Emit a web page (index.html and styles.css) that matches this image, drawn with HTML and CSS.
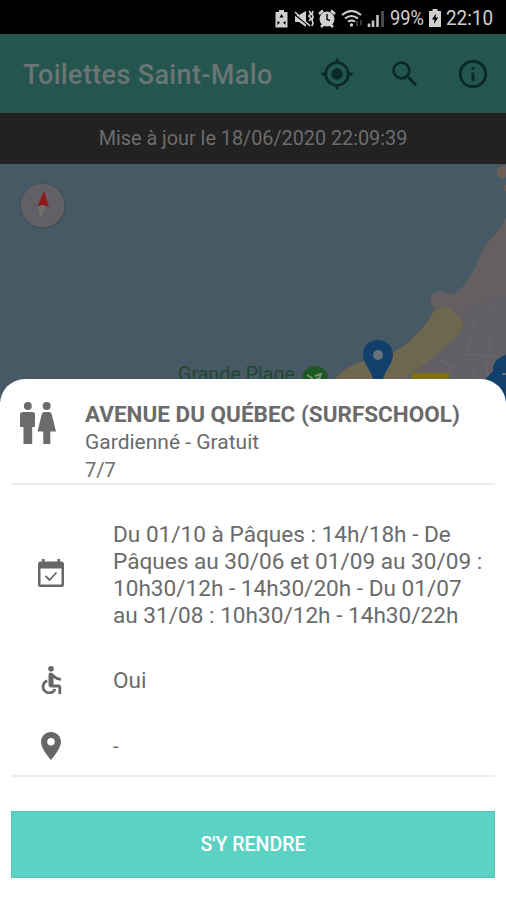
FILE: index.html
```html
<!DOCTYPE html>
<html lang="fr">
<head>
    <meta charset="UTF-8">
    <meta name="viewport" content="width=device-width, initial-scale=1.0">
    <title>Toilettes Saint-Malo</title>
    <link rel="stylesheet" href="styles.css">
</head>
<body>
    <div class="status-bar">
        <svg class="status-icons" viewBox="270 0 118 34">
            <!-- battery saver -->
            <path fill="#d0d0d0" d="M279 9h5v2h3.500v15.500H275.500V11H279z"/>
            <path fill="#000" d="M281.500 13l2 3.500h-4zM277.500 20l2.500 1.500-2.500 2.500zM285.500 20l-2.500 1.500 2.500 2.500z"/>
            <!-- sound off -->
            <path fill="#d0d0d0" d="M295 14h4l7-4v16l-7-5h-4z"/>
            <path d="M294 13l15 12" stroke="#000" stroke-width="1.200"/>
            <path d="M295 11l15 14M309 10l2 2.500-2 2.500 2 2.500-2 2.500M313 10l-1 3 1 3-1 3 1 3-1 3" fill="none" stroke="#d0d0d0" stroke-width="1.700"/>
            <!-- alarm -->
            <circle cx="327" cy="18" r="7.500" fill="#d0d0d0"/>
            <path d="M319 13l4-3.500M335 13l-4-3.500M321 26l3-3M333 26l-3-3" stroke="#d0d0d0" stroke-width="2.600"/>
            <path d="M327 13v5.500l3 1" fill="none" stroke="#111" stroke-width="1.500"/>
            <!-- wifi -->
            <path d="M342 14q9.500-8 19 0M345 17.500q6.500-5 13 0M348 20.800q3.500-2.500 7 0" fill="none" stroke="#d0d0d0" stroke-width="2"/>
            <circle cx="351.500" cy="24" r="1.700" fill="#d0d0d0"/>
            <path d="M357 20v5M361 19v5" stroke="#444" stroke-width="1.800"/>
            <!-- signal -->
            <path d="M369 22.500V26M373 19.500V26M377.500 14V26" stroke="#c4c4c4" stroke-width="2.600"/>
            <path d="M382.500 10V26" stroke="#4a4a4a" stroke-width="3"/>
        </svg>
        <span class="percent">99%</span>
        <svg class="battery" viewBox="0 0 12 18">
            <path fill="#d0d0d0" d="M3.500 0h5v2H12v16H0V2h3.500z"/>
            <path fill="#000" d="M7 4.500L2.800 10.500H5.500L5 15l4.200-6.500H6.500z"/>
        </svg>
        <span class="clock">22:10</span>
    </div>

    <header class="app-bar">
        <h1>Toilettes Saint-Malo</h1>
        <nav class="actions">
            <svg viewBox="0 0 24 24"><path d="M12 8c-2.210 0-4 1.790-4 4s1.790 4 4 4 4-1.790 4-4-1.790-4-4-4zm8.940 3A8.994 8.994 0 0 0 13 3.060V1h-2v2.060A8.994 8.994 0 0 0 3.060 11H1v2h2.060A8.994 8.994 0 0 0 11 20.940V23h2v-2.060A8.994 8.994 0 0 0 20.940 13H23v-2h-2.060zM12 19c-3.870 0-7-3.130-7-7s3.130-7 7-7 7 3.130 7 7-3.130 7-7 7z"/></svg>
            <svg viewBox="0 0 24 24"><path d="M15.500 14h-.790l-.280-.270A6.471 6.471 0 0 0 16 9.500 6.500 6.500 0 1 0 9.500 16c1.610 0 3.090-.590 4.230-1.570l.270.280v.790l5 4.990L20.490 19l-4.990-5zm-6 0C7.010 14 5 11.990 5 9.500S7.010 5 9.500 5 14 7.010 14 9.500 11.990 14 9.500 14z"/></svg>
            <svg viewBox="0 0 24 24"><path d="M11 7h2v2h-2zm0 4h2v6h-2zm1-9C6.480 2 2 6.480 2 12s4.480 10 10 10 10-4.480 10-10S17.520 2 12 2zm0 18c-4.410 0-8-3.590-8-8s3.590-8 8-8 8 3.590 8 8-3.590 8-8 8z"/></svg>
        </nav>
    </header>

    <div class="update">Mise à jour le 18/06/2020 22:09:39</div>

    <svg class="map" viewBox="0 164 506 238">
        <rect y="164" width="506" height="238" fill="#465965"/>
        <path fill="#646061" d="M506 218C500 228 494 236 489 241C482 249 479 260 475 268C469 278 463 288 457 292Q451 295 449 294Q443 290 437 291Q430 294 431 300Q431 306 435 309L425 340L370 402H506z"/>
        <path fill="#615f65" d="M506 296L465 307L462 332L425 360L395 402H506z"/>
        <path fill="#6e674f" d="M434 311Q440 307 450 308L463 322Q462 332 456 338L429 361L405 378V402H315L333 382Q344 366 363 361L395 351Q408 345 415 335Q427 325 434 311z"/>
        <path fill="#6d5d57" d="M506 165L498 168L496 175L502 179L506 177zM506 184L503 187L506 192z"/>
        <path d="M486 311L475 321L466 354L448 372L448 382M466 354L474 365V382M466 354L506 358M490 330V355M500 300L486 311M440 360L454 367M485 358L488 382" fill="none" stroke="#6b696e" stroke-width="1"/>
        <path d="M412 376h37" stroke="#81700f" stroke-width="6"/>
        <!-- compass -->
        <circle cx="43" cy="206" r="23" fill="#3f505b"/>
        <circle cx="42.700" cy="205.500" r="21.800" fill="#626065"/>
        <path fill="#8e1717" d="M44 191l5 16-5.500-2-6 1.500z"/>
        <path fill="#70706a" d="M38 206l5.500-1 2 1-5 13z"/>
        <text class="place" x="178" y="381" textLength="117" lengthAdjust="spacingAndGlyphs">Grande Plage</text>
        <circle cx="315" cy="379" r="13" fill="#1c5724"/>
        <path d="M307 375l5 3-4 5M315 376l6-2-2 5 5 3M311 383l7-5" fill="none" stroke="#788d72" stroke-width="2"/>
        <!-- markers -->
        <path fill="#12406c" d="M378 340C369 340 363 346.500 363 355C363 363 371 370 374 382H382C385 370 393 363 393 355C393 346.500 387 340 378 340z"/>
        <circle cx="378" cy="355" r="5" fill="#67717c"/>
        <path fill="#12406c" d="M506 355Q497 357 493 366V371Q489 376 486 378L492 402H506z"/>
        <path d="M502 374h4" stroke="#67717c" stroke-width="2"/>
    </svg>

    <main class="sheet">
        <section class="place-head">
            <svg class="wc" viewBox="0 0 36 42">
                <circle cx="7.800" cy="4" r="4"/>
                <circle cx="26.700" cy="4" r="4"/>
                <path d="M3 10h9.500q2.500 0 2.500 2.500V25H12.200V42H3.500V25H0V12.500Q0 10 3 10z"/>
                <path d="M24.500 10h4.500q2 0 2.700 2L36 29.500H30.300V42H23.300V29.500H17.500L21.800 12q.7-2 2.700-2z"/>
            </svg>
            <div>
                <h2>AVENUE DU QUÉBEC (SURFSCHOOL)</h2>
                <p class="access">Gardienné - Gratuit</p>
                <p class="days">7/7</p>
            </div>
        </section>

        <section class="details">
            <div class="row hours">
                <svg viewBox="0 0 26 28">
                    <path fill-rule="evenodd" d="M4 0h2.600v2.500h12.800V0H22v2.500h1.500Q26 2.500 26 5v20.500Q26 28 23.500 28h-21Q0 28 0 25.500V5Q0 2.500 2.500 2.500H4zM2.500 9.500v16h21v-16z"/>
                    <path d="M7.500 17l4 4 7-7.500" fill="none" stroke="#676767" stroke-width="1.800"/>
                </svg>
                <p>Du 01/10 à Pâques : 14h/18h - De<br>Pâques au 30/06 et 01/09 au 30/09 :<br>10h30/12h - 14h30/20h - Du 01/07<br>au 31/08 : 10h30/12h - 14h30/22h</p>
            </div>
            <div class="row">
                <svg viewBox="0 0 26 28">
                    <circle cx="13" cy="2.800" r="2.800"/>
                    <path d="M10.500 9q0-2.500 2.200-2.500 1.500 0 2.800 1.500 3 3.500 7.500 4v2.800q-4.500-.3-7.500-2.800v6.500H20.500q2.700 0 2.700 2.700V28H20.400v-6.500H13.500q-3 0-3-3z"/>
                    <path d="M9.300 14.800a6.200 6.200 0 1 0 7.700 8.200" fill="none" stroke="#676767" stroke-width="2.700"/>
                </svg>
                <p>Oui</p>
            </div>
            <div class="row address">
                <svg viewBox="0 0 26 28"><path fill-rule="evenodd" d="M13 0C7.500 0 3 4.300 3 9.800C3 17 13 28 13 28S23 17 23 9.800C23 4.300 18.500 0 13 0zM13 6a3.800 3.800 0 1 1 0 7.600a3.800 3.800 0 0 1 0-7.600z"/></svg>
                <p>-</p>
            </div>
        </section>

        <button class="go">S'Y RENDRE</button>
    </main>
</body>
</html>
```
FILE: styles.css
```css
* {
    box-sizing: border-box;
}
body {
    margin: 0;
    height: 900px;
    overflow: hidden;
    display: flex;
    flex-direction: column;
    background: #fff;
    color: #6b6b6b;
    font-family: Roboto, sans-serif;
}
h1, h2, p {
    margin: 0;
}
.status-bar {
    height: 34px;
    flex: none;
    display: flex;
    align-items: center;
    padding: 1px 0 0 270px;
    background: #000;
    color: #d0d0d0;
    font-size: 21px;
}
.status-icons {
    width: 118px;
    height: 34px;
    flex: none;
}
.percent, .clock {
    width: 38px;
    margin-left: 2px;
    transform: scaleX(0.87);
    transform-origin: left;
}
.percent {
    width: 39px;
}
.clock {
    margin-left: 5px;
    transform: scaleX(0.9);
}
.battery {
    width: 12px;
    height: 18px;
    flex: none;
}
.app-bar {
    height: 79px;
    flex: none;
    display: flex;
    align-items: center;
    justify-content: space-between;
    padding: 0 16px 0 23px;
    background: #24564f;
}
.app-bar h1 {
    color: #6c7475;
    font-size: 27px;
    font-weight: 500;
    letter-spacing: 0.35px;
    line-height: 32px;
    padding-top: 3px;
}
.actions {
    display: flex;
    gap: 34px;
}
.actions svg {
    width: 34px;
    height: 34px;
    fill: #0b292b;
}
.update {
    height: 51px;
    flex: none;
    background: #222;
    color: #6d6d6d;
    font-size: 19.8px;
    line-height: 52px;
    text-align: center;
}
.map {
    width: 506px;
    height: 238px;
    flex: none;
    display: block;
}
.place {
    font-size: 21px;
    fill: #24462f;
}
.sheet {
    position: relative;
    height: 521px;
    flex: none;
    margin-top: -23px;
    padding: 0 11px;
    background: #fff;
    border-radius: 25px 25px 0 0;
}
.place-head {
    height: 106px;
    display: flex;
    padding: 21px 0 0 9px;
    border-bottom: 2px solid #ededed;
}
.wc {
    width: 36px;
    height: 42px;
    margin: 2px 29px 0 0;
    fill: #6b6b6b;
}
.place-head h2 {
    font-size: 22.5px;
    font-weight: 700;
    line-height: 28px;
    white-space: nowrap;
}
.access, .days {
    font-size: 21px;
    line-height: 29px;
}
.days {
    font-size: 20px;
    line-height: 27px;
}
.details {
    height: 292px;
    padding: 36px 0 0 27px;
    border-bottom: 2px solid #ededed;
}
.row {
    display: flex;
    align-items: center;
    gap: 49px;
    margin-bottom: 38px;
    font-size: 22.6px;
    line-height: 27px;
    white-space: nowrap;
}
.row svg {
    width: 26px;
    height: 28px;
    flex: none;
    fill: #676767;
}
.hours {
    margin-bottom: 37px;
}
.hours svg {
    margin-bottom: 4px;
}
.address {
    font-size: 20px;
}
.go {
    display: block;
    width: 484px;
    height: 67px;
    margin-top: 34px;
    border: 1px solid #53c6b6;
    background: #5bd2c4;
    color: #fff;
    font-family: inherit;
    font-size: 19.5px;
    font-weight: 500;
}
```
